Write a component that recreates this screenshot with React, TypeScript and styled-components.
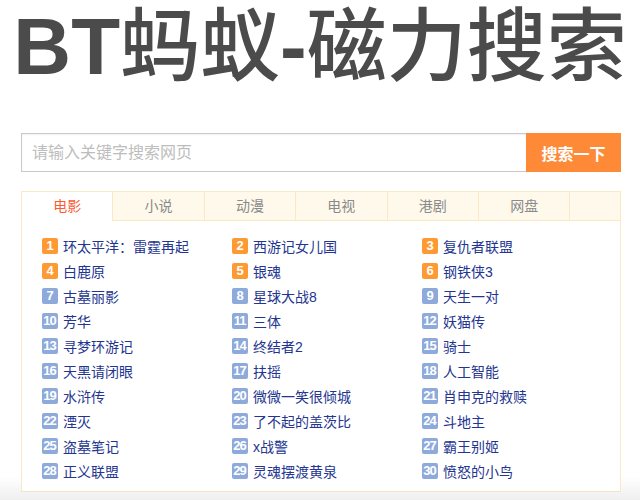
import React from "react";
import styled, { createGlobalStyle } from "styled-components";

const Global = createGlobalStyle`
  html, body { margin: 0; padding: 0; }
  body {
    min-height: 500px;
    background: linear-gradient(to bottom, #ffffff 0px, #ffffff 476px, #efefef 500px);
    font-family: "Liberation Sans", "Noto Sans CJK SC", sans-serif;
  }
`;

const Page = styled.div`
  width: 600px;
  margin: 0 auto;
  padding-top: 6px;
  position: relative;
  left: 1px;
`;

const Title = styled.h1`
  margin: 0 -6px 0 -8px;
  height: 82px;
  line-height: 82px;
  text-align: center;
  font-size: 80px;
  color: #4b4b4b;
  white-space: nowrap;
  font-family: "Liberation Sans", "Noto Sans CJK SC", sans-serif;
  font-weight: 500;
`;

const Latin = styled.span`
  font-weight: 700;
`;

const SearchBar = styled.form`
  display: flex;
  margin-top: 45px;
  height: 39px;
`;

const Input = styled.input`
  flex: 1;
  box-sizing: border-box;
  height: 39px;
  border: 1px solid #cbc7cb;
  border-right: none;
  padding: 0 10px;
  font-size: 16px;
  font-family: "Liberation Sans", "Noto Sans CJK SC", sans-serif;
  outline: none;
  box-shadow: inset 0 1px 2px rgba(0, 0, 0, 0.06);
  &::placeholder { color: #bdbdbd; }
`;

const Button = styled.button`
  width: 95px;
  height: 39px;
  border: none;
  background: #fe8a38;
  color: #fff;
  font-size: 16px;
  font-weight: 700;
  font-family: "Liberation Sans", "Noto Sans CJK SC", sans-serif;
  padding: 0;
  cursor: pointer;
`;

const Box = styled.div`
  margin-top: 19px;
  border: 1px solid #fbe8c6;
  border-bottom-color: #f5e2cb;
  background: #fff;
`;

const Tabs = styled.div`
  display: flex;
  height: 28px;
  background: #fef9ea;
  border-bottom: 1px solid #fbe9c4;
`;

const Tab = styled.div<{ $active?: boolean }>`
  box-sizing: border-box;
  border-right: 1px solid #fbe9c4;
  text-align: center;
  line-height: 29px;
  height: 29px;
  font-size: 14px;
  color: ${(p) => (p.$active ? "#fb5b35" : "#8a8a8a")};
  background: ${(p) => (p.$active ? "#ffffff" : "transparent")};
  flex: 0 0 91.4px;
  cursor: pointer;
`;

const List = styled.ul`
  list-style: none;
  margin: 0;
  padding: 12px 0 8px 20px;
  display: grid;
  grid-template-columns: 190px 190px 190px;
  grid-auto-rows: 25px;
`;

const Item = styled.li`
  display: flex;
  align-items: center;
  gap: 5px;
  font-size: 14px;
  color: #233590;
  white-space: nowrap;
`;

const Badge = styled.span<{ $hot: boolean }>`
  display: inline-flex;
  align-items: center;
  justify-content: center;
  width: 16px;
  height: 16px;
  border-radius: 2px;
  background: ${(p) => (p.$hot ? "#fe9a34" : "#8eaadb")};
  color: #fff;
  font-size: 13px;
  font-weight: 700;
  letter-spacing: -1px;
  text-indent: -1px;
  font-family: "Liberation Sans", sans-serif;
`;

const tabs = ["电影", "小说", "动漫", "电视", "港剧", "网盘"];

const items = [
  "环太平洋：雷霆再起",
  "西游记女儿国",
  "复仇者联盟",
  "白鹿原",
  "银魂",
  "钢铁侠3",
  "古墓丽影",
  "星球大战8",
  "天生一对",
  "芳华",
  "三体",
  "妖猫传",
  "寻梦环游记",
  "终结者2",
  "骑士",
  "天黑请闭眼",
  "扶摇",
  "人工智能",
  "水浒传",
  "微微一笑很倾城",
  "肖申克的救赎",
  "湮灭",
  "了不起的盖茨比",
  "斗地主",
  "盗墓笔记",
  "x战警",
  "霸王别姬",
  "正义联盟",
  "灵魂摆渡黄泉",
  "愤怒的小鸟",
];

export default function App() {
  return (
    <>
      <Global />
      <Page>
        <Title>
          <Latin>BT</Latin>蚂蚁<Latin>-</Latin>磁力搜索
        </Title>
        <SearchBar onSubmit={(e) => e.preventDefault()}>
          <Input placeholder="请输入关键字搜索网页" />
          <Button type="submit">搜索一下</Button>
        </SearchBar>
        <Box>
          <Tabs>
            {tabs.map((t, i) => (
              <Tab key={t} $active={i === 0}>
                {t}
              </Tab>
            ))}
          </Tabs>
          <List>
            {items.map((name, i) => (
              <Item key={name}>
                <Badge $hot={i < 6}>{i + 1}</Badge>
                {name}
              </Item>
            ))}
          </List>
        </Box>
      </Page>
    </>
  );
}
